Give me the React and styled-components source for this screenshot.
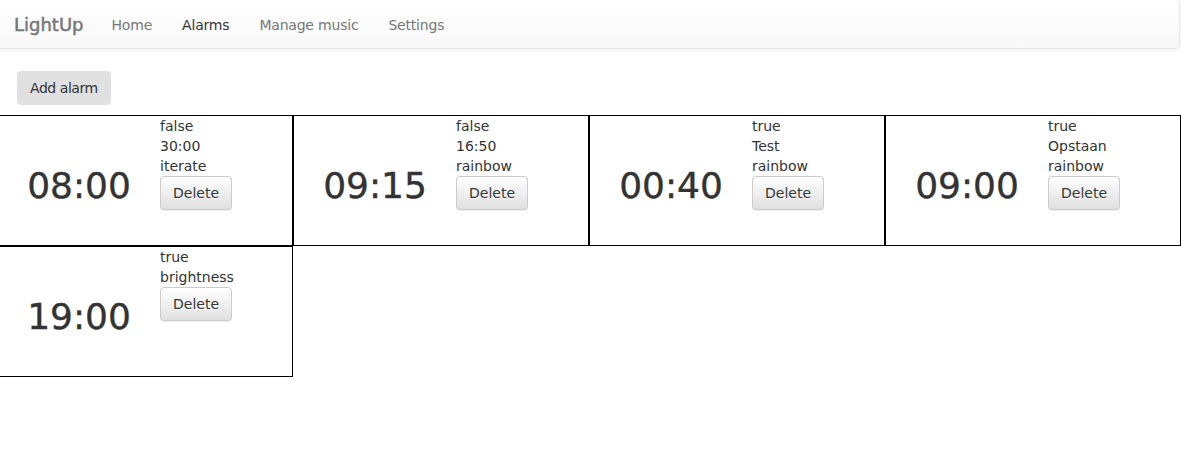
import React from "react";
import styled, { createGlobalStyle } from "styled-components";

const GlobalStyle = createGlobalStyle`
  html, body { margin: 0; padding: 0; background: #fff; }
  body {
    font-family: "DejaVu Sans", Verdana, sans-serif;
    font-size: 14px;
    line-height: 20px;
    color: #333;
    overflow: hidden;
  }
  * { box-sizing: border-box; }
`;

const Navbar = styled.nav`
  display: flex;
  align-items: stretch;
  height: 50px;
  margin: -1px 1px 0 -4px;
  border: 1px solid #e7e7e7;
  border-radius: 4px;
  background-image: linear-gradient(to bottom, #fff 0, #f8f8f8 100%);
  box-shadow: inset 0 1px 0 rgba(255, 255, 255, 0.15), 0 1px 5px rgba(0, 0, 0, 0.075);
`;

const Brand = styled.a`
  display: block;
  padding: 15px 13px 15px 17px;
  font-size: 18px;
  line-height: 20px;
  color: #777;
  text-decoration: none;
  -webkit-text-stroke: 0.5px #777;
`;

const NavList = styled.ul`
  display: flex;
  list-style: none;
  margin: 0;
  padding: 0;
`;

const NavLink = styled.a`
  display: block;
  padding: 15px;
  line-height: 20px;
  letter-spacing: -0.2px;
  color: ${(p) => (p.$active ? "#333" : "#777")};
  text-decoration: none;
`;

const Content = styled.main`
  padding: 22px 0 0 17px;
`;

const Button = styled.button`
  display: inline-block;
  font-family: inherit;
  font-size: 14px;
  line-height: 20px;
  padding: 6px 12px;
  border-radius: 4px;
  color: #333;
  cursor: pointer;
`;

const FlatButton = styled(Button)`
  border: 1px solid #e0e0e0;
  background: #e0e0e0;
  letter-spacing: -0.45px;
`;

const DeleteButton = styled(Button)`
  border: 1px solid #ccc;
  background-image: linear-gradient(to bottom, #fff 0, #e0e0e0 100%);
  text-shadow: 0 1px 0 #fff;
  box-shadow: inset 0 1px 0 rgba(255, 255, 255, 0.15), 0 1px 1px rgba(0, 0, 0, 0.075);
`;

const Grid = styled.div`
  display: grid;
  grid-template-columns: repeat(4, 296px);
  margin: 10px 0 0 -20px;
`;

const Card = styled.div`
  display: grid;
  grid-template-columns: 162px 1fr;
  height: 131px;
  border: 1px solid #000;
`;

const Time = styled.h1`
  align-self: center;
  margin: 20px 0 10px;
  font-size: 36px;
  font-weight: 500;
  line-height: 1.1;
  text-align: center;
  color: #333;
  -webkit-text-stroke: 0.4px #333;
`;

const Info = styled.div`
  align-self: start;
  display: flex;
  flex-direction: column;
  align-items: flex-start;
`;

const alarms = [
  { time: "08:00", lines: ["false", "30:00", "iterate"] },
  { time: "09:15", lines: ["false", "16:50", "rainbow"] },
  { time: "00:40", lines: ["true", "Test", "rainbow"] },
  { time: "09:00", lines: ["true", "Opstaan", "rainbow"] },
  { time: "19:00", lines: ["true", "brightness"] },
];

export default function App() {
  return (
    <>
      <GlobalStyle />
      <Navbar>
        <Brand href="#">LightUp</Brand>
        <NavList>
          <li><NavLink href="#">Home</NavLink></li>
          <li><NavLink href="#" $active>Alarms</NavLink></li>
          <li><NavLink href="#">Manage music</NavLink></li>
          <li><NavLink href="#">Settings</NavLink></li>
        </NavList>
      </Navbar>
      <Content>
        <FlatButton>Add alarm</FlatButton>
        <Grid>
          {alarms.map((a, i) => (
            <Card key={i}>
              <Time>{a.time}</Time>
              <Info>
                {a.lines.map((l, j) => (
                  <span key={j}>{l}</span>
                ))}
                <DeleteButton>Delete</DeleteButton>
              </Info>
            </Card>
          ))}
        </Grid>
      </Content>
    </>
  );
}
